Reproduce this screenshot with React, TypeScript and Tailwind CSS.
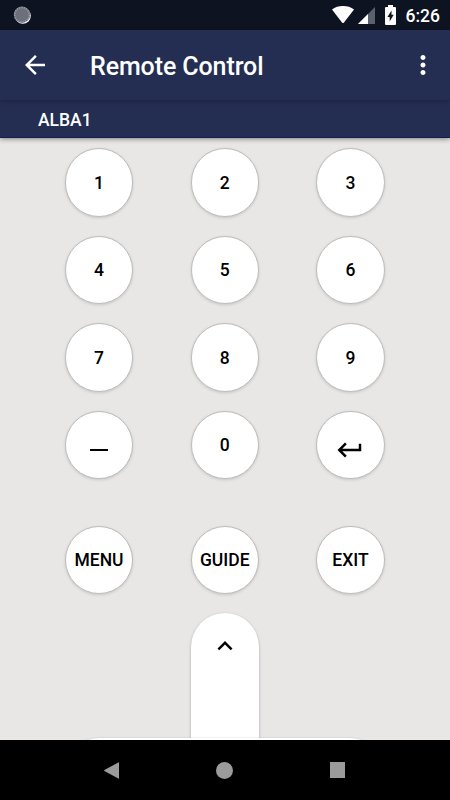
import type { ReactNode } from 'react'
import { MdArrowBack, MdKeyboardArrowUp, MdKeyboardReturn, MdMoreVert } from 'react-icons/md'

type Key = {
  id: string
  label: ReactNode
}

const numberKeys: Key[] = [
  { id: '1', label: '1' },
  { id: '2', label: '2' },
  { id: '3', label: '3' },
  { id: '4', label: '4' },
  { id: '5', label: '5' },
  { id: '6', label: '6' },
  { id: '7', label: '7' },
  { id: '8', label: '8' },
  { id: '9', label: '9' },
  { id: 'dash', label: <span className="mt-2.5 h-[2px] w-[17.5px] bg-black" /> },
  { id: '0', label: '0' },
  { id: 'enter', label: <MdKeyboardReturn className="mt-[9.5px] mr-px size-[30px]" /> },
]

const menuKeys: Key[] = [
  { id: 'menu', label: 'MENU' },
  { id: 'guide', label: 'GUIDE' },
  { id: 'exit', label: 'EXIT' },
]

function RoundKey({ label }: { label: ReactNode }) {
  return (
    <button className="flex size-[68.5px] items-center justify-center rounded-full border border-[#bdbdbd] bg-white pt-px text-[17.5px] font-medium text-black shadow-[0_1px_3px_rgba(0,0,0,0.14)]">
      {label}
    </button>
  )
}

function StatusBar() {
  return (
    <div className="flex h-[30px] items-center bg-[#0e1322] pr-2.5 pl-[13px] text-white">
      <svg className="size-[19px]" viewBox="0 0 19 19">
        <circle cx="9.8" cy="9.8" r="8" fill="#fff" />
        <circle cx="9" cy="8.8" r="8.2" fill="#6d707b" />
        <circle cx="9" cy="8.8" r="7.3" fill="none" stroke="#9da0a9" strokeWidth="1.6" strokeDasharray="1.2 1.2" />
      </svg>
      <div className="ml-auto flex items-center">
        <svg className="mr-0.5 h-[18px] w-[22px]" viewBox="0 0 22 18">
          <path d="M0 3.4C3 1.1 6.8 0 11 0s8 1.1 11 3.4L12 16.4q-1 1.2-2 0z" fill="#fff" />
        </svg>
        <svg className="mt-px ml-0.5 size-[17px]" viewBox="0 0 17 17">
          <path d="M17 0v17H0z" fill="#5c606d" />
          <path d="M10 7v10H0z" fill="#fff" />
        </svg>
        <svg className="ml-2.5 h-5 w-[11px]" viewBox="0 0 11 20">
          <path d="M3 0h5v2h2q1 0 1 1v16q0 1-1 1H1q-1 0-1-1V3q0-1 1-1h2z" fill="#fff" />
          <path d="M6.5 5.5v4.3h2.2L4.7 16.5v-4.6H2.4z" fill="#0e1322" />
        </svg>
        <span className="mt-[3px] ml-2.5 text-[17.5px] leading-none font-medium">6:26</span>
      </div>
    </div>
  )
}

function NavigationBar() {
  return (
    <div className="flex h-[60px] items-center justify-center gap-[97px] bg-black pr-px">
      <svg className="h-[17px] w-[15px]" viewBox="0 0 15 17" fill="#9b9b9b">
        <path d="M15 .8v15.4q0 .7-.7.4L.4 8.9q-.6-.4 0-.8L14.3.4q.7-.4.7.4z" />
      </svg>
      <div className="size-[17px] rounded-full bg-[#9b9b9b]" />
      <div className="h-4 w-[15px] bg-[#9b9b9b]" />
    </div>
  )
}

export default function App() {
  return (
    <div className="flex h-[800px] w-[450px] flex-col overflow-hidden bg-[#e8e7e5] font-[Roboto,sans-serif]">
      <StatusBar />

      {/* Toolbar */}
      <header className="relative z-20 flex h-[70px] items-center bg-[#242e52] pr-[12.5px] pl-5 text-white shadow-[0_1px_4px_rgba(0,0,0,0.28)]">
        <MdArrowBack className="size-[30px]" />
        <h1 className="mt-0.5 ml-10 text-[25px] leading-none font-medium tracking-[-0.1px]">Remote Control</h1>
        <MdMoreVert className="ml-auto size-[30px]" />
      </header>

      {/* Device name */}
      <div className="relative z-10 flex h-[37.5px] items-center border-b border-[#0b2050] bg-[#242e52] pt-1 pl-[38px] text-[17.5px] font-medium text-white shadow-[0_1px_5px_rgba(0,0,0,0.45)]">
        ALBA1
      </div>

      {/* Remote */}
      <main className="flex h-[602.5px] flex-col items-center overflow-hidden pt-[10.5px] pr-[0.5px]">
        <div className="grid grid-cols-3 gap-x-[57.25px] gap-y-[19px]">
          {numberKeys.map((key) => (
            <RoundKey key={key.id} label={key.label} />
          ))}
        </div>

        <div className="mt-[46.5px] grid grid-cols-3 gap-x-[57.25px]">
          {menuKeys.map((key) => (
            <RoundKey key={key.id} label={key.label} />
          ))}
        </div>

        {/* Direction pad, runs on below the fold */}
        <div className="mt-[18.5px] flex h-[125px] w-[68.5px] shrink-0 justify-center rounded-t-full bg-white pt-[18.5px] shadow-[0_1px_3px_rgba(0,0,0,0.28)]">
          <MdKeyboardArrowUp className="size-[30px]" />
        </div>
        <div className="relative h-[69px] w-[319px] shrink-0 rounded-full bg-white shadow-[0_0_2px_rgba(0,0,0,0.2)]" />
      </main>

      <NavigationBar />
    </div>
  )
}
